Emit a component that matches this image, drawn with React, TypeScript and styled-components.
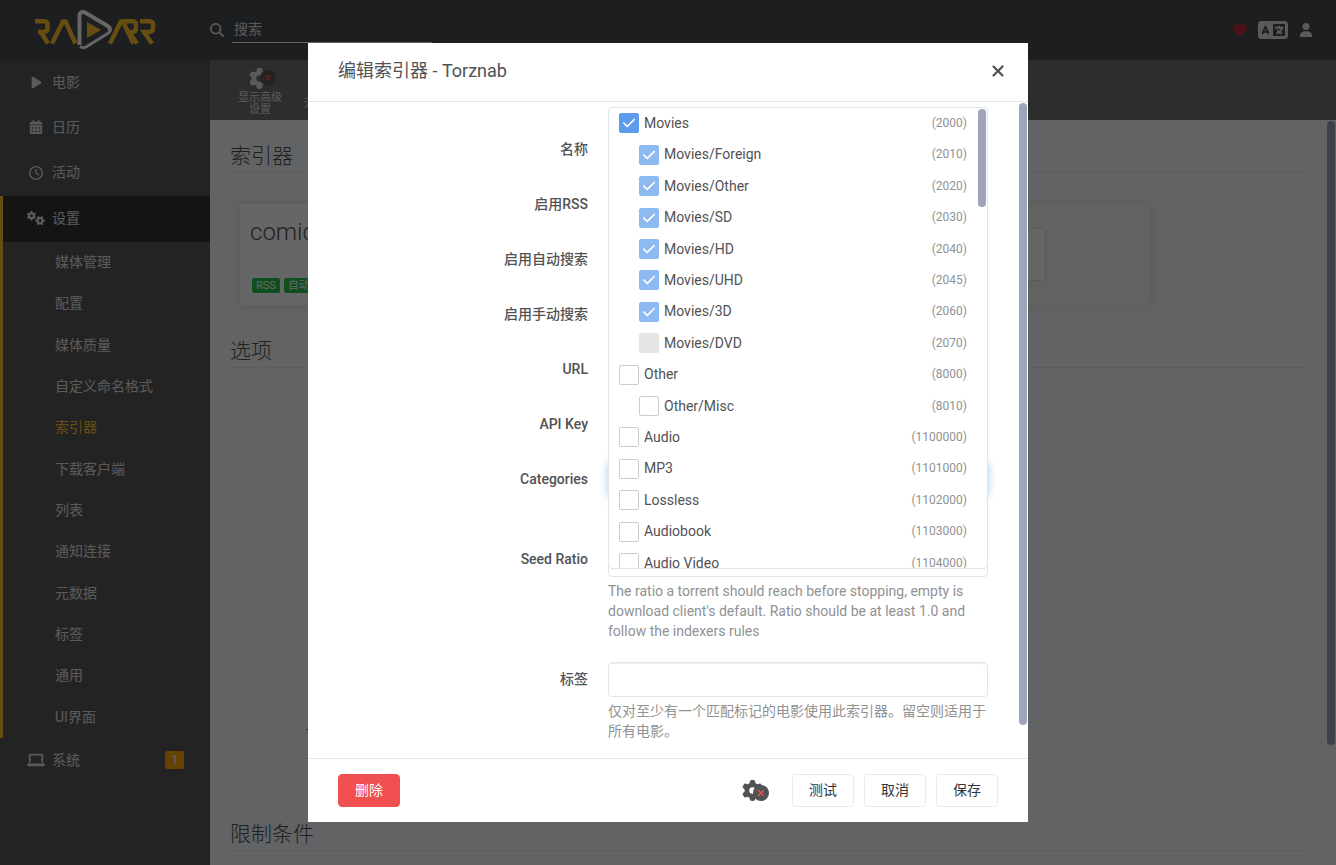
import React from "react";
import styled, { createGlobalStyle, css } from "styled-components";
import {
  FaCalendarDays,
  FaCheck,
  FaCircle,
  FaGear,
  FaGears,
  FaHeart,
  FaLanguage,
  FaLaptop,
  FaMagnifyingGlass,
  FaPlay,
  FaRegClock,
  FaUser,
  FaXmark,
} from "react-icons/fa6";

const GlobalStyle = createGlobalStyle`
  *, *::before, *::after { box-sizing: border-box; }
  html, body, #root { height: 100%; }
  body {
    margin: 0;
    overflow: hidden;
    color: #515253;
    background: #f5f7fa;
    font-family: Roboto, "Noto Sans CJK SC", sans-serif;
    font-size: 14px;
    line-height: 21px;
  }
  ul { margin: 0; padding: 0; list-style: none; }
  a { color: inherit; text-decoration: none; }
  button, input { font: inherit; color: inherit; }
  button { cursor: pointer; }
`;

const Page = styled.div`
  display: flex;
  flex-direction: column;
  height: 100vh;
`;

/* Header */

const Header = styled.header`
  display: flex;
  flex: 0 0 60px;
  align-items: center;
  background: #464b51;
  color: #e1e2e3;
`;

const LogoLink = styled.a`
  display: flex;
  flex: 0 0 210px;
  padding-left: 34px;
`;

const SearchForm = styled.form`
  display: flex;
  align-items: center;
  gap: 8px;
`;

const SearchInput = styled.input`
  width: 200px;
  height: 26px;
  padding: 0 2px 2px;
  border: 0;
  border-bottom: 1px solid #ffffff;
  background: transparent;
  &::placeholder { color: #e1e2e3; opacity: 1; }
`;

const HeaderActions = styled.nav`
  display: flex;
  align-items: center;
  gap: 11px;
  margin-left: auto;
  padding-right: 23px;
`;

const HeaderLink = styled.a<{ $color?: string }>`
  display: flex;
  color: ${(p) => p.$color ?? "#e1e2e3"};
`;

/* Sidebar */

const Columns = styled.div`
  display: flex;
  flex: 1;
  min-height: 0;
`;

const Sidebar = styled.nav`
  flex: 0 0 210px;
  background: #595959;
  color: #e1e2e3;
`;

const TopMenu = styled.ul`
  display: grid;
  grid-auto-rows: 1fr;
  min-height: 136px;
`;

const SettingsSection = styled.div`
  border-left: 3px solid #ffc230;
`;

const SubMenu = styled.ul`
  display: grid;
  grid-auto-rows: 1fr;
  min-height: 496px;
`;

const MenuLink = styled.a<{ $selected?: boolean }>`
  display: flex;
  align-items: center;
  gap: 4px;
  height: 45px;
  padding: 0 26px 1px 24px;
  ${(p) =>
    p.$selected &&
    css`
      height: 46px;
      padding-left: 21px;
      padding-bottom: 2px;
      background: #333333;
    `}
`;

const MenuIcon = styled.span`
  display: flex;
  justify-content: center;
  width: 24px;
`;

const SubLink = styled.a<{ $active?: boolean }>`
  display: flex;
  align-items: center;
  height: 100%;
  padding-left: 52px;
  color: ${(p) => (p.$active ? "#ffc230" : "inherit")};
`;

const Badge = styled.span`
  width: 19px;
  margin-left: auto;
  border-radius: 2px;
  background: #ffa500;
  color: #ffffff;
  font-size: 12px;
  line-height: 18px;
  text-align: center;
`;

/* Main page */

const Main = styled.main`
  display: flex;
  flex: 1;
  flex-direction: column;
  min-width: 0;
  position: relative;
`;

const Toolbar = styled.div`
  display: flex;
  flex: 0 0 60px;
  padding: 0 20px;
  background: #707070;
`;

const ToolbarButton = styled.button`
  display: flex;
  flex-direction: column;
  align-items: center;
  width: 60px;
  padding: 6px 0 0;
  border: 0;
  background: transparent;
  color: #e1e2e3;
  font-size: 11px;
  line-height: 12px;
`;

const ToolbarIcon = styled.span`
  display: flex;
  align-items: center;
  justify-content: center;
  height: 25px;
  padding-left: 6px;
`;

const ToolbarLabel = styled.span`
  display: flex;
  align-items: center;
  height: 26px;
  padding: 0 8px;
`;

const Content = styled.div`
  flex: 1;
  min-height: 0;
  padding: 20px 30px 0 20px;
  overflow: hidden;
`;

const Section = styled.section<{ $minHeight?: number }>`
  min-height: ${(p) => p.$minHeight ?? 0}px;
`;

const SectionTitle = styled.h2`
  margin: 0 0 21px;
  border-bottom: 1px solid #e5e5e5;
  font-size: 21px;
  font-weight: 300;
  line-height: 32px;
`;

const LastSectionTitle = styled(SectionTitle)`
  margin-bottom: 0;
`;

const Cards = styled.div`
  display: flex;
  flex-wrap: wrap;
  gap: 20px;
  padding: 10px;
`;

const Card = styled.article<{ $add?: boolean }>`
  display: flex;
  flex-direction: column;
  justify-content: ${(p) => (p.$add ? "center" : "space-between")};
  align-items: ${(p) => (p.$add ? "center" : "flex-start")};
  width: 290px;
  height: 101px;
  padding: 10px;
  border-radius: 3px;
  background: ${(p) => (p.$add ? "#f5f5f5" : "#ffffff")};
  box-shadow: 0 0 10px 1px #e1e1e1;
`;

const CardName = styled.h3`
  margin: 0;
  font-size: 24px;
  font-weight: 300;
  line-height: 36px;
`;

const CardLabels = styled.div`
  display: flex;
  gap: 4px;
  padding: 2px;
`;

const CardLabel = styled.span`
  padding: 0 4px;
  border-radius: 2px;
  background: #27c24c;
  color: #ffffff;
  font-size: 11px;
  line-height: 15px;
`;

const AddButton = styled.button`
  width: 82px;
  height: 53px;
  border: 1px solid #e3e3e3;
  border-radius: 4px;
  background: #ffffff;
`;

const OptionRow = styled.div`
  display: flex;
  justify-content: flex-end;
  width: 146px;
  padding-top: 336px;
  font-weight: 500;
`;

const ScrollThumb = styled.span<{ $top: number; $right: number; $height: string }>`
  position: absolute;
  top: ${(p) => p.$top}px;
  right: ${(p) => p.$right}px;
  width: 8px;
  height: ${(p) => p.$height};
  border-radius: 4px;
  background: #9ea4b9;
`;

/* Modal */

const Backdrop = styled.div`
  position: fixed;
  inset: 0;
  display: flex;
  align-items: center;
  justify-content: center;
  background: rgba(0, 0, 0, 0.6);
`;

const Modal = styled.div`
  display: flex;
  flex-direction: column;
  width: 720px;
  max-width: 90%;
  height: 90%;
  background: #ffffff;
`;

const ModalHeader = styled.header`
  display: flex;
  align-items: center;
  justify-content: space-between;
  flex: 0 0 59px;
  padding: 0 21px 2px 30px;
  border-bottom: 1px solid #e5e5e5;
`;

const ModalTitle = styled.h1`
  margin: 0;
  font-size: 18px;
  font-weight: 400;
  line-height: 28px;
`;

const CloseButton = styled.button`
  display: flex;
  padding: 0;
  border: 0;
  background: transparent;
`;

const ModalBody = styled.div`
  position: relative;
  flex: 1;
  min-height: 0;
  padding: 30px 40px 0 30px;
  overflow: hidden;
`;

const FormGroup = styled.div`
  display: flex;
  gap: 20px;
  margin-bottom: 20px;
`;

const FormLabel = styled.label`
  flex: 0 0 250px;
  font-weight: 500;
  line-height: 35px;
  text-align: right;
`;

const Control = styled.div`
  position: relative;
  flex: 1;
  min-width: 0;
`;

const TextInput = styled.input<{ $focused?: boolean }>`
  display: block;
  width: 100%;
  height: 35px;
  padding: 6px 16px;
  border: 1px solid ${(p) => (p.$focused ? "#66afe9" : "#dde6e9")};
  border-radius: 4px;
  outline: 0;
  background: #ffffff;
  box-shadow: inset 0 1px 1px rgba(0, 0, 0, 0.075)
    ${(p) => (p.$focused ? ", 0 0 8px rgba(102, 175, 233, 0.6)" : "")};
`;

const HelpText = styled.p`
  min-height: 20px;
  margin: 4px 0 1px;
  color: #909293;
  line-height: 20px;
`;

const Dropdown = styled.div`
  position: absolute;
  z-index: 2;
  bottom: -47px;
  left: 0;
  width: 100%;
  height: 462px;
  overflow: hidden;
  border: 1px solid #dde6e9;
  border-radius: 4px;
  background: #ffffff;
`;

const OptionList = styled.ul`
  display: grid;
  grid-auto-rows: 1fr;
  min-height: 471px;
`;

const Option = styled.li<{ $child?: boolean }>`
  display: flex;
  align-items: center;
  padding: 0 20px 1px ${(p) => (p.$child ? 30 : 10)}px;
`;

const OptionLabel = styled.label`
  display: flex;
  flex: 1;
  align-items: center;
  gap: 5px;
`;

const CheckFrame = styled.span`
  display: grid;
  width: 20px;
  height: 20px;
  color: #ffffff;
  & > * { grid-area: 1 / 1; place-self: center; }
  & > svg { pointer-events: none; z-index: 1; }
`;

const Checkbox = styled.input`
  appearance: none;
  width: 20px;
  height: 20px;
  margin: 0;
  border: 1px solid #cccccc;
  border-radius: 2px;
  background: #ffffff;
  &:disabled { border-color: #e6e6e6; background: #e6e6e6; }
  &:checked { border-color: #5d9cec; background: #5d9cec; }
  &:checked:disabled { border-color: #8ebaf2; background: #8ebaf2; }
`;

const OptionHint = styled.span`
  color: #909293;
  font-size: 12px;
`;

const ModalFooter = styled.footer`
  display: flex;
  flex: 0 0 64px;
  align-items: center;
  gap: 10px;
  padding: 0 30px;
  border-top: 1px solid #e5e5e5;
`;

const Button = styled.button<{ $danger?: boolean }>`
  height: 33px;
  padding: 0 16px;
  border: 1px solid ${(p) => (p.$danger ? "#f05050" : "#eaeaea")};
  border-radius: 4px;
  background: ${(p) => (p.$danger ? "#f05050" : "#ffffff")};
  color: ${(p) => (p.$danger ? "#ffffff" : "#333333")};
`;

const AdvancedButton = styled.button`
  display: flex;
  margin-left: auto;
  margin-right: 12px;
  padding: 0;
  border: 0;
  background: transparent;
`;

const GearBox = styled.span`
  position: relative;
  display: flex;
  width: 28px;
`;

const GearBadge = styled.span<{ $color: string }>`
  position: absolute;
  top: 5px;
  left: 11px;
  display: grid;
  color: ${(p) => p.$color};
  & > svg { grid-area: 1 / 1; place-self: center; }
  & > svg:last-child { color: #f05050; }
`;

const ToolbarGear = styled(GearBox)`
  ${GearBadge} { top: 2px; }
`;

const menu = [
  { label: "电影", icon: <FaPlay size={13} /> },
  { label: "日历", icon: <FaCalendarDays size={14} /> },
  { label: "活动", icon: <FaRegClock size={14} /> },
];

const settings = [
  "媒体管理", "配置", "媒体质量", "自定义命名格式", "索引器", "下载客户端",
  "列表", "通知连接", "元数据", "标签", "通用", "UI界面",
];

type Category = {
  name: string;
  id: number;
  child?: boolean;
  checked?: boolean;
  disabled?: boolean;
};

const categories: Category[] = [
  { name: "Movies", id: 2000, checked: true },
  { name: "Movies/Foreign", id: 2010, child: true, checked: true, disabled: true },
  { name: "Movies/Other", id: 2020, child: true, checked: true, disabled: true },
  { name: "Movies/SD", id: 2030, child: true, checked: true, disabled: true },
  { name: "Movies/HD", id: 2040, child: true, checked: true, disabled: true },
  { name: "Movies/UHD", id: 2045, child: true, checked: true, disabled: true },
  { name: "Movies/3D", id: 2060, child: true, checked: true, disabled: true },
  { name: "Movies/DVD", id: 2070, child: true, disabled: true },
  { name: "Other", id: 8000 },
  { name: "Other/Misc", id: 8010, child: true },
  { name: "Audio", id: 1100000 },
  { name: "MP3", id: 1101000 },
  { name: "Lossless", id: 1102000 },
  { name: "Audiobook", id: 1103000 },
  { name: "Audio Video", id: 1104000 },
];

const fields = ["名称", "启用RSS", "启用自动搜索", "启用手动搜索", "URL", "API Key"];

function Logo() {
  return (
    <svg width="122" height="42" viewBox="0 0 122 42" fill="none" aria-label="Radarr">
      <g stroke="#ffc230" strokeWidth="4.5">
        <path d="M1 12.300H10Q13.500 12.300 13.500 16V19Q13.500 23 9 23H4" />
        <path d="M7 23L14 34.500" />
        <path d="M18 34.500L29 12.500H31.500L41.500 34.500" />
        <path d="M76 34.500L87 12.500H89L99.500 34.500" />
        <path d="M90 12.300H98Q102 12.300 102 16V19Q102 23 98 23H95L103 34.500" />
        <path d="M106 12.300H115Q119 12.300 119 16V19Q119 23 115 23H110L118 34.500" />
      </g>
      <path d="M45.500 36V7Q45.500 1.500 51 3.500L73 16.500Q77 19 75.500 22" stroke="#ffffff" strokeWidth="4" />
      <path d="M76 22Q75 24 72 25.500L52 38Q49 39.500 46 37.500" stroke="#ffffff" strokeWidth="3" />
      <path d="M53 13L67 21L53 29Z" fill="#ffc230" />
    </svg>
  );
}

export default function App() {
  return (
    <>
      <GlobalStyle />
      <Page>
        <Header>
          <LogoLink href="#home"><Logo /></LogoLink>
          <SearchForm>
            <FaMagnifyingGlass size={14} />
            <SearchInput aria-label="搜索" placeholder="搜索" />
          </SearchForm>
          <HeaderActions>
            <HeaderLink href="#donate" aria-label="Donate" $color="#c4273c"><FaHeart size={14} /></HeaderLink>
            <HeaderLink href="#language" aria-label="Language"><FaLanguage size={30} /></HeaderLink>
            <HeaderLink href="#account" aria-label="Account"><FaUser size={14} /></HeaderLink>
          </HeaderActions>
        </Header>
        <Columns>
          <Sidebar>
            <TopMenu>
              {menu.map((m) => (
                <li key={m.label}>
                  <MenuLink href="#menu"><MenuIcon>{m.icon}</MenuIcon>{m.label}</MenuLink>
                </li>
              ))}
            </TopMenu>
            <SettingsSection>
              <MenuLink href="#settings" $selected><MenuIcon><FaGears size={18} /></MenuIcon>设置</MenuLink>
              <SubMenu>
                {settings.map((s) => (
                  <li key={s}><SubLink href="#settings" $active={s === "索引器"}>{s}</SubLink></li>
                ))}
              </SubMenu>
            </SettingsSection>
            <MenuLink href="#system"><MenuIcon><FaLaptop size={18} /></MenuIcon>系统<Badge>1</Badge></MenuLink>
          </Sidebar>
          <Main>
            <Toolbar>
              <ToolbarButton>
                <ToolbarIcon>
                  <ToolbarGear>
                    <FaGear size={21} />
                    <GearBadge $color="#595959"><FaCircle size={16} /><FaXmark size={10} /></GearBadge>
                  </ToolbarGear>
                </ToolbarIcon>
                <ToolbarLabel>显示高级设置</ToolbarLabel>
              </ToolbarButton>
              <ToolbarButton>
                <ToolbarIcon />
                <ToolbarLabel>无修改</ToolbarLabel>
              </ToolbarButton>
            </Toolbar>
            <Content>
              <Section $minHeight={195}>
                <SectionTitle>索引器</SectionTitle>
                <Cards>
                  <Card>
                    <CardName>comicat</CardName>
                    <CardLabels><CardLabel>RSS</CardLabel><CardLabel>自动搜索</CardLabel></CardLabels>
                  </Card>
                  <Card />
                  <Card $add><AddButton aria-label="添加" /></Card>
                </Cards>
              </Section>
              <Section $minHeight={483}>
                <SectionTitle>选项</SectionTitle>
                <OptionRow>可用性延迟</OptionRow>
              </Section>
              <Section><LastSectionTitle>限制条件</LastSectionTitle></Section>
            </Content>
            <ScrollThumb $top={61} $right={1} $height="calc(100% - 181px)" />
          </Main>
        </Columns>
      </Page>

      <Backdrop>
        <Modal role="dialog" aria-labelledby="modal-title">
          <ModalHeader>
            <ModalTitle id="modal-title">编辑索引器 - Torznab</ModalTitle>
            <CloseButton aria-label="关闭"><FaXmark size={18} /></CloseButton>
          </ModalHeader>
          <ModalBody>
            {fields.map((f, i) => (
              <FormGroup key={f}>
                <FormLabel htmlFor={`field-${i}`}>{f}</FormLabel>
                <Control><TextInput id={`field-${i}`} /></Control>
              </FormGroup>
            ))}
            <FormGroup>
              <FormLabel htmlFor="categories">Categories</FormLabel>
              <Control>
                <TextInput id="categories" $focused />
                <HelpText />
                <Dropdown>
                  <OptionList>
                    {categories.map((c) => (
                      <Option key={c.id} $child={c.child}>
                        <OptionLabel>
                          <CheckFrame>
                            <Checkbox type="checkbox" defaultChecked={c.checked} disabled={c.disabled} />
                            {c.checked && <FaCheck size={14} />}
                          </CheckFrame>
                          {c.name}
                        </OptionLabel>
                        <OptionHint>({c.id})</OptionHint>
                      </Option>
                    ))}
                  </OptionList>
                  <ScrollThumb $top={1} $right={1} $height="98px" />
                </Dropdown>
              </Control>
            </FormGroup>
            <FormGroup>
              <FormLabel htmlFor="seed-ratio">Seed Ratio</FormLabel>
              <Control>
                <TextInput id="seed-ratio" />
                <HelpText>
                  The ratio a torrent should reach before stopping, empty is download client's default. Ratio should be at least 1.0 and follow the indexers rules
                </HelpText>
              </Control>
            </FormGroup>
            <FormGroup>
              <FormLabel htmlFor="tags">标签</FormLabel>
              <Control>
                <TextInput id="tags" />
                <HelpText>仅对至少有一个匹配标记的电影使用此索引器。留空则适用于所有电影。</HelpText>
              </Control>
            </FormGroup>
            <ScrollThumb $top={1} $right={1} $height="calc(100% - 34px)" />
          </ModalBody>
          <ModalFooter>
            <Button $danger>删除</Button>
            <AdvancedButton aria-label="显示高级设置">
              <GearBox>
                <FaGear size={21} />
                <GearBadge $color="#515253"><FaCircle size={16} /><FaXmark size={10} /></GearBadge>
              </GearBox>
            </AdvancedButton>
            <Button>测试</Button>
            <Button>取消</Button>
            <Button>保存</Button>
          </ModalFooter>
        </Modal>
      </Backdrop>
    </>
  );
}
